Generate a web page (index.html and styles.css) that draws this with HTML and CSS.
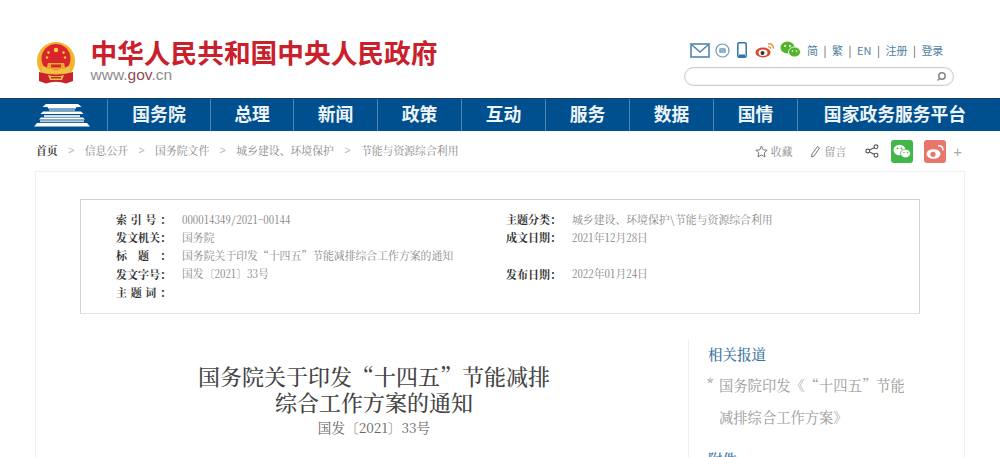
FILE: index.html
```html
<!DOCTYPE html>
<html lang="zh-CN">
<head>
<meta charset="utf-8">
<title>国务院关于印发“十四五”节能减排综合工作方案的通知</title>
<link rel="stylesheet" href="styles.css">
</head>
<body>
<header class="top">
  <div class="brand">
    <svg class="emblem" viewBox="0 0 40 42" width="40" height="42">
      <circle cx="20" cy="19" r="19" fill="#f3b52e"/>
      <circle cx="20" cy="16.500" r="14.500" fill="#d8262c"/>
      <path d="M7 24q13 7 26 0l2 7H5z" fill="#f3c14a"/>
      <path d="M12 21h16l1.500 6h-19z" fill="#e9a92c"/>
      <path d="M15 22.500h10v3H15z" fill="#d8262c"/>
      <path d="M3 30q17 5 34 0v9l-7 2.500q-10-3.500-20 0L3 39z" fill="#c8232b"/>
      <path d="M12 33q8 2.500 16 0l-2 5h-12z" fill="#f3c14a"/>
      <path d="M15 35h10v1.500H15z" fill="#c8232b"/>
      <g fill="#f7d34a">
        <circle cx="20" cy="8" r="2.200"/><circle cx="12.500" cy="10.500" r="1.200"/><circle cx="27.500" cy="10.500" r="1.200"/><circle cx="11" cy="15.500" r="1.200"/><circle cx="29" cy="15.500" r="1.200"/>
      </g>
    </svg>
    <div class="brand-text">
      <div class="brand-name">中华人民共和国中央人民政府</div>
      <div class="brand-url">www.<b>gov</b>.cn</div>
    </div>
  </div>
  <div class="tools">
    <div class="tool-row">
      <svg width="20" height="15" viewBox="0 0 20 15" class="i-mail"><rect x="1" y="1" width="18" height="13" fill="none" stroke="#4f87ad" stroke-width="1.600"/><path d="M1.500 1.500 10 9l8.500-7.500" fill="none" stroke="#4f87ad" stroke-width="1.400"/></svg>
      <svg width="15" height="15" viewBox="0 0 15 15" class="i-msg"><circle cx="7.500" cy="7.500" r="6.500" fill="none" stroke="#6f9ab8" stroke-width="1.200"/><rect x="4" y="5" width="7" height="5" rx="1.500" fill="#8fb2ca"/></svg>
      <svg width="10" height="16" viewBox="0 0 10 16" class="i-phone"><rect x=".8" y=".8" width="8.400" height="14.400" rx="1.200" fill="none" stroke="#2f76a6" stroke-width="1.500"/><rect x="2" y="12.500" width="6" height="2.500" fill="#2f76a6"/></svg>
      <svg width="20" height="16" viewBox="0 0 20 16" class="i-weibo"><ellipse cx="8" cy="10.500" rx="7.500" ry="5" fill="#d9452f"/><ellipse cx="8" cy="10.800" rx="4.500" ry="3.200" fill="#fff"/><circle cx="7.500" cy="11" r="2" fill="#333"/><path d="M13 2q5-1 5.500 4.500" fill="none" stroke="#e9953c" stroke-width="1.500"/><path d="M13 5q2.500-.5 2.800 2" fill="none" stroke="#e9953c" stroke-width="1.200"/></svg>
      <svg width="21" height="17" viewBox="0 0 21 17" class="i-wechat"><ellipse cx="7.500" cy="6.500" rx="7" ry="6" fill="#55b32c"/><ellipse cx="14.500" cy="11" rx="6" ry="5" fill="#55b32c" stroke="#fff" stroke-width=".8"/><circle cx="5" cy="5" r="1" fill="#fff"/><circle cx="10" cy="5" r="1" fill="#fff"/><circle cx="12.500" cy="10" r=".8" fill="#fff"/><circle cx="16.500" cy="10" r=".8" fill="#fff"/></svg>
      <nav class="lang"><span>简</span><i>|</i><span>繁</span><i>|</i><span>EN</span><i>|</i><span>注册</span><i>|</i><span>登录</span></nav>
    </div>
    <div class="search">
      <svg width="11" height="11" viewBox="0 0 11 11"><circle cx="6" cy="5" r="3.200" fill="none" stroke="#888" stroke-width="1.500"/><path d="M3.500 7.500 1.500 9.500" stroke="#888" stroke-width="1.500"/></svg>
    </div>
  </div>
</header>

<nav class="mainnav">
  <a class="home">
    <svg width="56" height="24" viewBox="0 0 56 24" fill="#fff">
      <path d="M12 1h32l3.500 2.800-5.500.4v1.300H14V4.200l-5.500-.4z"/>
      <path d="M15 6.400h26v1.200H15z" opacity=".8"/>
      <path d="M9 8.500h38l2.500 2.500H6.500z"/>
      <path d="M10 12h36v2H10z" opacity=".8"/>
      <path d="M7 14.500h42l2 2H5z"/>
      <path d="M6 17.300h44v2H6z" opacity=".7"/>
      <path d="M3 20h50l3 3.500H0z"/>
    </svg>
  </a>
  <a class="n1">国务院</a><a class="n2">总理</a><a class="n3">新闻</a><a class="n3">政策</a><a class="n3">互动</a><a class="n3">服务</a><a class="n3">数据</a><a class="n3">国情</a><a class="n4">国家政务服务平台</a>
</nav>

<div class="crumbbar">
  <div class="crumbs">
    <b>首页</b><i>&gt;</i><span>信息公开</span><i>&gt;</i><span>国务院文件</span><i>&gt;</i><span>城乡建设、环境保护</span><i>&gt;</i><span>节能与资源综合利用</span>
  </div>
  <div class="share">
    <svg width="13" height="13" viewBox="0 0 13 13"><path d="M6.500 1 8.200 4.800 12.200 5.200 9.200 7.900 10 12 6.500 9.900 3 12 3.800 7.900.8 5.200 4.800 4.800z" fill="none" stroke="#777" stroke-width="1"/></svg>
    <span class="s-fav">收藏</span>
    <svg width="11" height="13" viewBox="0 0 11 13"><path d="M7.500 1.500 9.500 3 4 11l-2.500 1L2 9z" fill="none" stroke="#777" stroke-width="1"/></svg>
    <span class="s-msg">留言</span>
    <svg class="s-share" width="14" height="14" viewBox="0 0 14 14"><g fill="none" stroke="#555" stroke-width="1.100"><circle cx="11" cy="2.800" r="1.900"/><circle cx="2.800" cy="7" r="1.900"/><circle cx="11" cy="11.200" r="1.900"/><path d="M4.500 6.100 9.300 3.700M4.500 7.900l4.800 2.400"/></g></svg>
    <a class="tile green">
      <svg width="18" height="15" viewBox="0 0 18 15"><ellipse cx="6.500" cy="6" rx="6" ry="5.200" fill="#fff"/><ellipse cx="12.500" cy="9.500" rx="5" ry="4.300" fill="#fff" stroke="#43b649" stroke-width=".8"/><circle cx="4.500" cy="4.500" r=".9" fill="#43b649"/><circle cx="8.500" cy="4.500" r=".9" fill="#43b649"/><circle cx="11" cy="8.500" r=".7" fill="#43b649"/><circle cx="14.500" cy="8.500" r=".7" fill="#43b649"/></svg>
    </a>
    <a class="tile red">
      <svg width="18" height="15" viewBox="0 0 18 15"><ellipse cx="7.500" cy="10" rx="7" ry="4.800" fill="#fff"/><circle cx="7" cy="10.300" r="2.600" fill="#e8776b"/><path d="M12 2q5-1 5 4.500" fill="none" stroke="#fff" stroke-width="1.500"/></svg>
    </a>
    <span class="plus">+</span>
  </div>
</div>

<main class="card">
  <section class="meta">
    <span class="lab">索引号：</span><span class="val">000014349/2021-00144</span><span class="lab">主题分类：</span><span class="val">城乡建设、环境保护\节能与资源综合利用</span>
    <span class="lab">发文机关：</span><span class="val">国务院</span><span class="lab">成文日期：</span><span class="val">2021年12月28日</span>
    <span class="lab">标题：</span><span class="val">国务院关于印发“十四五”节能减排综合工作方案的通知</span><span class="lab"></span><span class="val"></span>
    <span class="lab">发文字号：</span><span class="val">国发〔2021〕33号</span><span class="lab">发布日期：</span><span class="val">2022年01月24日</span>
    <span class="lab">主题词：</span><span class="val"></span><span class="lab"></span><span class="val"></span>
  </section>
  <div class="columns">
    <article class="doc">
      <h1>国务院关于印发“十四五”节能减排<br>综合工作方案的通知</h1>
      <p class="docno">国发〔2021〕33号</p>
    </article>
    <aside class="side">
      <h2>相关报道</h2>
      <ul><li>国务院印发《“十四五”节能减排综合工作方案》</li></ul>
      <h2 class="second">附件</h2>
    </aside>
  </div>
</main>
</body>
</html>
```
FILE: styles.css
```css
* { box-sizing: border-box; }
html, body { margin: 0; padding: 0; height: 457px; overflow: hidden; background: #fff; }
body { font-family: "Noto Serif CJK SC", "Noto Sans CJK SC", sans-serif; color: #555; text-spacing-trim: space-all; }
a { color: inherit; text-decoration: none; }

.top { height: 98px; display: flex; justify-content: space-between; }
.brand { display: flex; padding: 41px 0 0 36px; }
.emblem { margin-top: 1px; }
.brand-text { margin-left: 14.500px; margin-top: -4px; }
.brand-name { font-family: "Noto Sans CJK SC", sans-serif; font-weight: 700; font-size: 26.700px; line-height: 30px; color: #c9202c; white-space: nowrap; }
.brand-url { font-family: "Liberation Sans", sans-serif; font-size: 15.500px; line-height: 16px; color: #8c8c8c; }
.brand-url b { font-weight: 400; color: #8f4b4e; }

.tools { width: 316px; padding: 41px 46px 0 0; }
.tool-row { display: flex; align-items: center; height: 18px; margin-left: 6px; font-family: "Noto Sans CJK SC", sans-serif; }
.tool-row svg { flex: none; }
.i-msg { margin-left: 5px; }
.i-phone { margin-left: 7px; }
.i-weibo { margin-left: 8px; }
.i-wechat { margin-left: 5px; margin-top: -2px; }
.lang { display: flex; align-items: center; margin-left: 6px; font-size: 11px; color: #4f7f9f; white-space: nowrap; }
.lang i { font-style: normal; margin: 0 5.500px; color: #555; }
.search { height: 19px; margin-top: 8px; border: 1.500px solid #ccc; border-radius: 10px; display: flex; align-items: center; justify-content: flex-end; padding-right: 6px; box-shadow: inset 0 0 2px #ddd; }

.mainnav { height: 33px; background: #00508f; border-top: 1px solid #1a3f63; display: flex; font-family: "Noto Sans CJK SC", sans-serif; font-weight: 700; font-size: 17.800px; color: #eef4f9; }
.mainnav a { display: flex; align-items: center; justify-content: center; border-right: 1px solid #4d87b5; white-space: nowrap; padding-bottom: 5px; }
.mainnav .home { width: 108px; padding: 0 0 0 16px; }
.n1 { width: 103px; }
.n2 { width: 83px; }
.n3 { width: 84px; }
.mainnav .n4 { width: 202px; border-right: 0; padding-right: 8px; }

.crumbbar { height: 40px; display: flex; justify-content: space-between; align-items: center; padding: 0 38px 0 36px; font-size: 10.850px; }
.crumbs { display: flex; align-items: center; color: #888; white-space: nowrap; margin-top: -2px; }
.crumbs b { color: #444; }
.crumbs i { font-family: "Liberation Sans", sans-serif; font-style: normal; color: #bbb; width: 27px; text-align: center; font-size: 11px; }
.share { display: flex; align-items: center; color: #888; }
.s-fav { margin: 0 17px 0 3px; }
.s-msg { margin: 0 19px 0 4px; }
.tile { width: 22px; height: 23px; border-radius: 3px; display: flex; align-items: center; justify-content: center; }
.green { background: #43b649; margin-left: 12px; }
.red { background: #e8776b; margin-left: 11px; }
.plus { font-family: "Liberation Sans", sans-serif; font-size: 15px; color: #aaa; margin-left: 7px; }

.card { margin: 0 35px; height: 400px; border: 1px solid #f0f0f0; border-bottom: 0; padding: 27px 44px 0; }
.meta { height: 115px; border: 1px solid #d2d2d2; border-bottom-color: #e2e2e2; padding: 10px 0 0 35px; display: grid; grid-template-columns: 66px 324px 66px 1fr; grid-auto-rows: 18.200px; font-size: 10.850px; align-items: center; white-space: nowrap; }
.lab { width: 55px; color: #333; font-weight: 700; font-size: 11px; text-align: justify; text-align-last: justify; }
.val { color: #888; font-feature-settings: "hwid"; }

.columns { display: flex; margin-top: 25px; margin-right: -44px; }
.doc { width: 588px; text-align: center; padding-top: 24px; }
.doc h1 { margin: 0; font-size: 22px; line-height: 26px; font-weight: 500; color: #444; }
.docno { margin: 2px 0 0; font-size: 13.600px; line-height: 20px; color: #666; }
.side { margin-left: 20px; flex: 1; border-left: 1px solid #eee; padding: 6px 0 0 19px; height: 200px; }
.side h2 { margin: 0; font-size: 14.500px; line-height: 18px; font-weight: 500; color: #3c74a3; }
.side ul { list-style: none; margin: 6px 0 0; padding: 0 50px 0 11px; }
.side li { font-size: 14.300px; line-height: 32px; color: #999; position: relative; }
.side li::before { content: "*"; position: absolute; left: -12px; top: -2px; font-size: 13px; color: #888; }
.side .second { margin-top: 17px; }
```
